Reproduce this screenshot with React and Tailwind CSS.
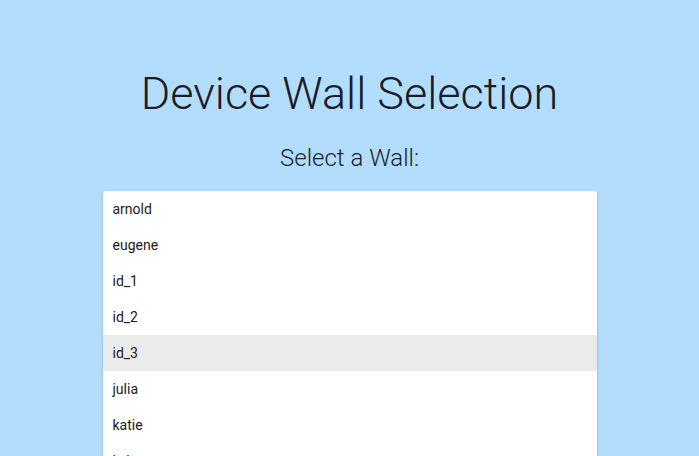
import React from 'react';

const walls = ['arnold', 'eugene', 'id_1', 'id_2', 'id_3', 'julia', 'katie', 'kyle', 'lisa', 'mike'];

const App = () => {
    return (
        <div className="min-h-screen h-[456px] overflow-hidden bg-[#b3ddfd] text-[#1c1c28]" style={{ fontFamily: 'Roboto, "Liberation Sans", sans-serif' }}>
            <div className="flex flex-col items-center pt-[66px]">
                <h1 className="text-[45px] leading-[56px] font-light">Device Wall Selection</h1>
                <h2 className="text-[24px] leading-[32px] font-light mt-[20px]">Select a Wall:</h2>

                {/* wall list */}
                <div className="w-[494px] mt-[17px] bg-white rounded-[2px] shadow-[0_1px_3px_rgba(0,0,0,0.2),0_1px_1px_rgba(0,0,0,0.14)]">
                    {walls.map(name => (
                        <div
                            key={name}
                            className={`h-[36px] flex items-center px-[10px] text-[14px] text-[#1a1a1a] rounded-[2px] ${name === 'id_3' ? 'bg-[#ebebeb]' : ''}`}
                        >
                            {name}
                        </div>
                    ))}
                </div>
            </div>
        </div>
    );
};

export default App;
